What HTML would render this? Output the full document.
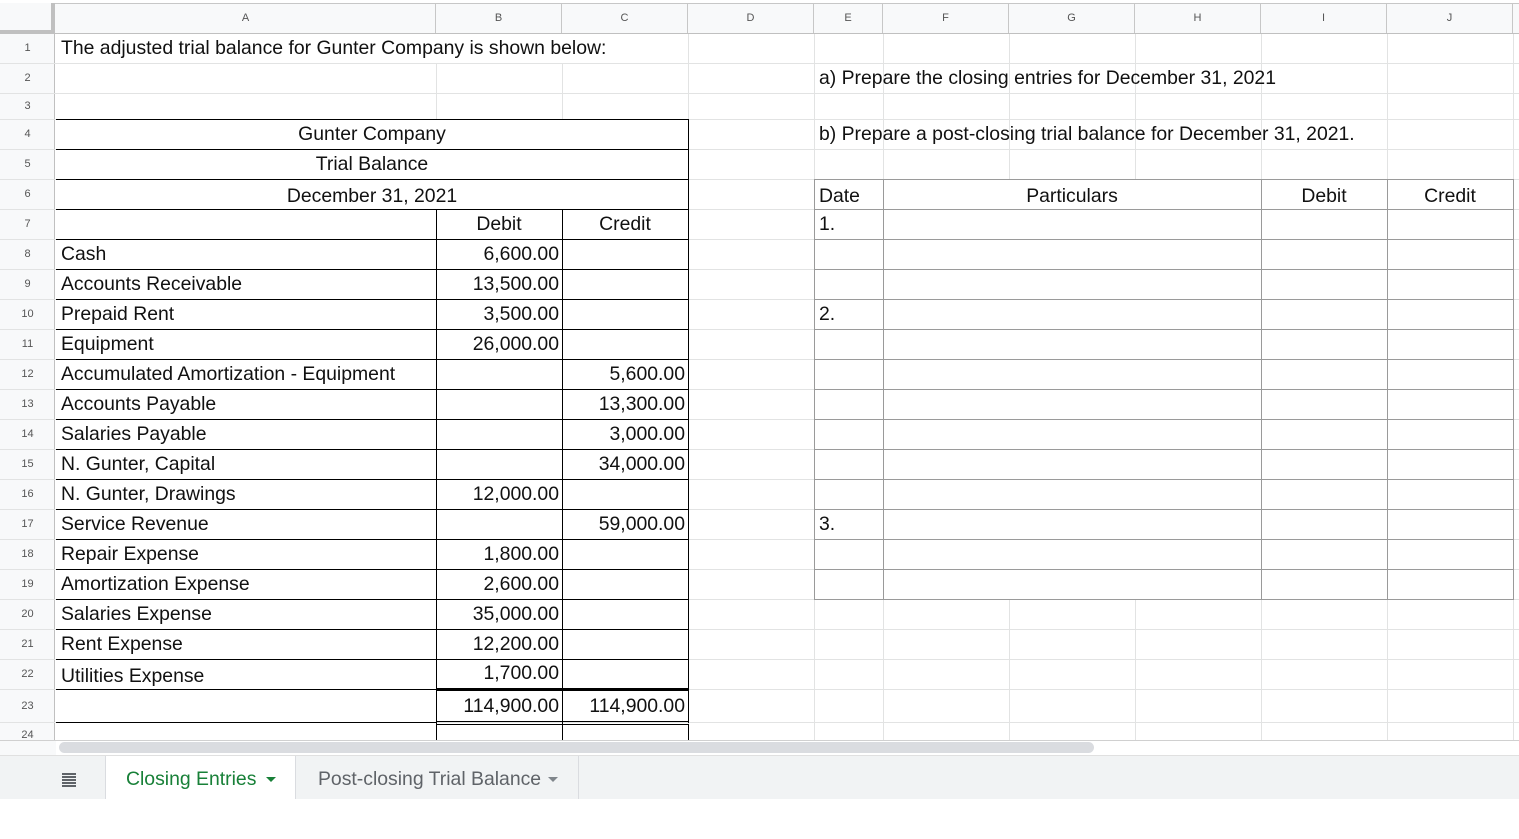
<!DOCTYPE html>
<html><head><meta charset="utf-8"><style>
*{margin:0;padding:0;box-sizing:border-box}
body{width:1519px;height:839px;background:#fff;position:relative;overflow:hidden;font-family:"Liberation Sans",sans-serif;color:#111}
div{position:absolute}
.h{background:#f8f9fa}
.gl{background:#e2e3e3}
.hd{top:4px;height:29px;line-height:29px;font-size:11px;color:#555;text-align:center;border-right:1px solid #c7c7c7}
.rn{left:0;width:55px;font-size:11px;color:#555;text-align:center}
.t{font-size:19.4px;white-space:nowrap}
.r{text-align:right}
.c{text-align:center}
.bk{background:#000}
.gr{background:#9a9a9a}
.w{background:#fff}
</style></head><body>
<div class="h" style="left:0;top:3px;width:1519px;height:31px;border-top:1px solid #c7c7c7;border-bottom:1px solid #c0c0c0"></div>
<div class="h" style="left:0;top:34px;width:55px;height:707px;border-right:1px solid #c0c0c0"></div>
<div style="left:0;top:3px;width:55px;height:31px;background:#f8f9fa;border-right:4px solid #c0c0c0;border-bottom:4px solid #c0c0c0"></div>
<div class="hd" style="left:56px;width:380px">A</div>
<div class="hd" style="left:436px;width:126px">B</div>
<div class="hd" style="left:562px;width:126px">C</div>
<div class="hd" style="left:688px;width:126px">D</div>
<div class="hd" style="left:814px;width:69px">E</div>
<div class="hd" style="left:883px;width:126px">F</div>
<div class="hd" style="left:1009px;width:126px">G</div>
<div class="hd" style="left:1135px;width:126px">H</div>
<div class="hd" style="left:1261px;width:126px">I</div>
<div class="hd" style="left:1387px;width:126px">J</div>
<div class="gl" style="left:436px;top:34px;width:1px;height:707px"></div>
<div class="gl" style="left:562px;top:34px;width:1px;height:707px"></div>
<div class="gl" style="left:688px;top:34px;width:1px;height:707px"></div>
<div class="gl" style="left:814px;top:34px;width:1px;height:707px"></div>
<div class="gl" style="left:883px;top:34px;width:1px;height:707px"></div>
<div class="gl" style="left:1009px;top:34px;width:1px;height:707px"></div>
<div class="gl" style="left:1135px;top:34px;width:1px;height:707px"></div>
<div class="gl" style="left:1261px;top:34px;width:1px;height:707px"></div>
<div class="gl" style="left:1387px;top:34px;width:1px;height:707px"></div>
<div class="gl" style="left:1513px;top:34px;width:1px;height:707px"></div>
<div class="gl" style="left:0;top:63px;width:1519px;height:1px"></div>
<div class="gl" style="left:0;top:93px;width:1519px;height:1px"></div>
<div class="gl" style="left:0;top:119px;width:1519px;height:1px"></div>
<div class="gl" style="left:0;top:149px;width:1519px;height:1px"></div>
<div class="gl" style="left:0;top:179px;width:1519px;height:1px"></div>
<div class="gl" style="left:0;top:209px;width:1519px;height:1px"></div>
<div class="gl" style="left:0;top:239px;width:1519px;height:1px"></div>
<div class="gl" style="left:0;top:269px;width:1519px;height:1px"></div>
<div class="gl" style="left:0;top:299px;width:1519px;height:1px"></div>
<div class="gl" style="left:0;top:329px;width:1519px;height:1px"></div>
<div class="gl" style="left:0;top:359px;width:1519px;height:1px"></div>
<div class="gl" style="left:0;top:389px;width:1519px;height:1px"></div>
<div class="gl" style="left:0;top:419px;width:1519px;height:1px"></div>
<div class="gl" style="left:0;top:449px;width:1519px;height:1px"></div>
<div class="gl" style="left:0;top:479px;width:1519px;height:1px"></div>
<div class="gl" style="left:0;top:509px;width:1519px;height:1px"></div>
<div class="gl" style="left:0;top:539px;width:1519px;height:1px"></div>
<div class="gl" style="left:0;top:569px;width:1519px;height:1px"></div>
<div class="gl" style="left:0;top:599px;width:1519px;height:1px"></div>
<div class="gl" style="left:0;top:629px;width:1519px;height:1px"></div>
<div class="gl" style="left:0;top:659px;width:1519px;height:1px"></div>
<div class="gl" style="left:0;top:689px;width:1519px;height:1px"></div>
<div class="gl" style="left:0;top:722px;width:1519px;height:1px"></div>
<!-- white-outs for merged cells -->
<div class="w" style="left:56px;top:34px;width:632px;height:29px"></div>
<div class="w" style="left:56px;top:120px;width:632px;height:89px"></div>
<div class="w" style="left:884px;top:180px;width:377px;height:419px"></div>
<div class="rn" style="top:34px;line-height:29px">1</div>
<div class="rn" style="top:64px;line-height:29px">2</div>
<div class="rn" style="top:94px;line-height:25px">3</div>
<div class="rn" style="top:120px;line-height:29px">4</div>
<div class="rn" style="top:150px;line-height:29px">5</div>
<div class="rn" style="top:180px;line-height:29px">6</div>
<div class="rn" style="top:210px;line-height:29px">7</div>
<div class="rn" style="top:240px;line-height:29px">8</div>
<div class="rn" style="top:270px;line-height:29px">9</div>
<div class="rn" style="top:300px;line-height:29px">10</div>
<div class="rn" style="top:330px;line-height:29px">11</div>
<div class="rn" style="top:360px;line-height:29px">12</div>
<div class="rn" style="top:390px;line-height:29px">13</div>
<div class="rn" style="top:420px;line-height:29px">14</div>
<div class="rn" style="top:450px;line-height:29px">15</div>
<div class="rn" style="top:480px;line-height:29px">16</div>
<div class="rn" style="top:510px;line-height:29px">17</div>
<div class="rn" style="top:540px;line-height:29px">18</div>
<div class="rn" style="top:570px;line-height:29px">19</div>
<div class="rn" style="top:600px;line-height:29px">20</div>
<div class="rn" style="top:630px;line-height:29px">21</div>
<div class="rn" style="top:660px;line-height:29px">22</div>
<div class="rn" style="top:691px;line-height:31px">23</div>
<div class="rn" style="top:726px;line-height:18px">24</div>
<div class="bk" style="left:56px;top:119px;width:633px;height:1px"></div>
<div class="bk" style="left:56px;top:149px;width:633px;height:1px"></div>
<div class="bk" style="left:56px;top:179px;width:633px;height:1px"></div>
<div class="bk" style="left:56px;top:209px;width:633px;height:1px"></div>
<div class="bk" style="left:56px;top:239px;width:633px;height:1px"></div>
<div class="bk" style="left:56px;top:269px;width:633px;height:1px"></div>
<div class="bk" style="left:56px;top:299px;width:633px;height:1px"></div>
<div class="bk" style="left:56px;top:329px;width:633px;height:1px"></div>
<div class="bk" style="left:56px;top:359px;width:633px;height:1px"></div>
<div class="bk" style="left:56px;top:389px;width:633px;height:1px"></div>
<div class="bk" style="left:56px;top:419px;width:633px;height:1px"></div>
<div class="bk" style="left:56px;top:449px;width:633px;height:1px"></div>
<div class="bk" style="left:56px;top:479px;width:633px;height:1px"></div>
<div class="bk" style="left:56px;top:509px;width:633px;height:1px"></div>
<div class="bk" style="left:56px;top:539px;width:633px;height:1px"></div>
<div class="bk" style="left:56px;top:569px;width:633px;height:1px"></div>
<div class="bk" style="left:56px;top:599px;width:633px;height:1px"></div>
<div class="bk" style="left:56px;top:629px;width:633px;height:1px"></div>
<div class="bk" style="left:56px;top:659px;width:633px;height:1px"></div>
<div class="bk" style="left:56px;top:689px;width:380px;height:1px"></div>
<div class="bk" style="left:436px;top:688px;width:253px;height:3px"></div>
<div class="bk" style="left:56px;top:722px;width:380px;height:1px"></div>
<div class="bk" style="left:436px;top:721px;width:253px;height:1px"></div>
<div class="bk" style="left:436px;top:724px;width:253px;height:1px"></div>
<div class="bk" style="left:688px;top:119px;width:1px;height:604px"></div>
<div class="bk" style="left:436px;top:209px;width:1px;height:531px"></div>
<div class="bk" style="left:562px;top:209px;width:1px;height:531px"></div>
<div class="bk" style="left:688px;top:724px;width:1px;height:17px"></div>
<div class="gr" style="left:814px;top:179px;width:700px;height:1px"></div>
<div class="gr" style="left:814px;top:209px;width:700px;height:1px"></div>
<div class="gr" style="left:814px;top:239px;width:700px;height:1px"></div>
<div class="gr" style="left:814px;top:269px;width:700px;height:1px"></div>
<div class="gr" style="left:814px;top:299px;width:700px;height:1px"></div>
<div class="gr" style="left:814px;top:329px;width:700px;height:1px"></div>
<div class="gr" style="left:814px;top:359px;width:700px;height:1px"></div>
<div class="gr" style="left:814px;top:389px;width:700px;height:1px"></div>
<div class="gr" style="left:814px;top:419px;width:700px;height:1px"></div>
<div class="gr" style="left:814px;top:449px;width:700px;height:1px"></div>
<div class="gr" style="left:814px;top:479px;width:700px;height:1px"></div>
<div class="gr" style="left:814px;top:509px;width:700px;height:1px"></div>
<div class="gr" style="left:814px;top:539px;width:700px;height:1px"></div>
<div class="gr" style="left:814px;top:569px;width:700px;height:1px"></div>
<div class="gr" style="left:814px;top:599px;width:700px;height:1px"></div>
<div class="gr" style="left:814px;top:179px;width:1px;height:421px"></div>
<div class="gr" style="left:883px;top:179px;width:1px;height:421px"></div>
<div class="gr" style="left:1261px;top:179px;width:1px;height:421px"></div>
<div class="gr" style="left:1387px;top:179px;width:1px;height:421px"></div>
<div class="gr" style="left:1513px;top:179px;width:1px;height:421px"></div>
<div class="t" style="left:61px;top:34px;line-height:29px">The adjusted trial balance for Gunter Company is shown below:</div>
<div class="t c" style="left:56px;top:120px;width:632px;line-height:29px">Gunter Company</div>
<div class="t c" style="left:56px;top:150px;width:632px;line-height:29px">Trial Balance</div>
<div class="t c" style="left:56px;top:182px;width:632px;line-height:29px">December 31, 2021</div>
<div class="t c" style="left:436px;top:210px;width:126px;line-height:29px">Debit</div>
<div class="t c" style="left:562px;top:210px;width:126px;line-height:29px">Credit</div>
<div class="t" style="left:61px;top:240px;line-height:29px">Cash</div>
<div class="t" style="left:61px;top:270px;line-height:29px">Accounts Receivable</div>
<div class="t" style="left:61px;top:300px;line-height:29px">Prepaid Rent</div>
<div class="t" style="left:61px;top:330px;line-height:29px">Equipment</div>
<div class="t" style="left:61px;top:360px;line-height:29px">Accumulated Amortization - Equipment</div>
<div class="t" style="left:61px;top:390px;line-height:29px">Accounts Payable</div>
<div class="t" style="left:61px;top:420px;line-height:29px">Salaries Payable</div>
<div class="t" style="left:61px;top:450px;line-height:29px">N. Gunter, Capital</div>
<div class="t" style="left:61px;top:480px;line-height:29px">N. Gunter, Drawings</div>
<div class="t" style="left:61px;top:510px;line-height:29px">Service Revenue</div>
<div class="t" style="left:61px;top:540px;line-height:29px">Repair Expense</div>
<div class="t" style="left:61px;top:570px;line-height:29px">Amortization Expense</div>
<div class="t" style="left:61px;top:600px;line-height:29px">Salaries Expense</div>
<div class="t" style="left:61px;top:630px;line-height:29px">Rent Expense</div>
<div class="t" style="left:61px;top:662px;line-height:29px">Utilities Expense</div>
<div class="t r" style="left:436px;top:240px;width:123px;line-height:29px">6,600.00</div>
<div class="t r" style="left:436px;top:270px;width:123px;line-height:29px">13,500.00</div>
<div class="t r" style="left:436px;top:300px;width:123px;line-height:29px">3,500.00</div>
<div class="t r" style="left:436px;top:330px;width:123px;line-height:29px">26,000.00</div>
<div class="t r" style="left:562px;top:360px;width:123px;line-height:29px">5,600.00</div>
<div class="t r" style="left:562px;top:390px;width:123px;line-height:29px">13,300.00</div>
<div class="t r" style="left:562px;top:420px;width:123px;line-height:29px">3,000.00</div>
<div class="t r" style="left:562px;top:450px;width:123px;line-height:29px">34,000.00</div>
<div class="t r" style="left:436px;top:480px;width:123px;line-height:29px">12,000.00</div>
<div class="t r" style="left:562px;top:510px;width:123px;line-height:29px">59,000.00</div>
<div class="t r" style="left:436px;top:540px;width:123px;line-height:29px">1,800.00</div>
<div class="t r" style="left:436px;top:570px;width:123px;line-height:29px">2,600.00</div>
<div class="t r" style="left:436px;top:600px;width:123px;line-height:29px">35,000.00</div>
<div class="t r" style="left:436px;top:630px;width:123px;line-height:29px">12,200.00</div>
<div class="t r" style="left:436px;top:659px;width:123px;line-height:29px">1,700.00</div>
<div class="t r" style="left:436px;top:692px;width:123px;line-height:29px">114,900.00</div>
<div class="t r" style="left:562px;top:692px;width:123px;line-height:29px">114,900.00</div>
<div class="t" style="left:819px;top:64px;line-height:29px">a) Prepare the closing entries for December 31, 2021</div>
<div class="t" style="left:819px;top:120px;line-height:29px">b) Prepare a post-closing trial balance for December 31, 2021.</div>
<div class="t" style="left:819px;top:182px;line-height:29px">Date</div>
<div class="t c" style="left:883px;top:182px;width:378px;line-height:29px">Particulars</div>
<div class="t c" style="left:1261px;top:182px;width:126px;line-height:29px">Debit</div>
<div class="t c" style="left:1387px;top:182px;width:126px;line-height:29px">Credit</div>
<div class="t" style="left:819px;top:210px;line-height:29px">1.</div>
<div class="t" style="left:819px;top:300px;line-height:29px">2.</div>
<div class="t" style="left:819px;top:510px;line-height:29px">3.</div>
<div style="left:0;top:740px;width:1519px;height:15px;background:#fff;border-top:1px solid #d0d0d0"></div>
<div style="left:0;top:741px;width:56px;height:14px;background:#f8f9fa"></div>
<div style="left:59px;top:742px;width:1035px;height:11px;background:#dadce0;border-radius:6px"></div>
<div style="left:0;top:755px;width:1519px;height:44px;background:#f1f3f4;border-top:1px solid #e0e0e0"></div>
<div style="left:62px;top:773px;width:14px;height:2px;background:#5f6368;box-shadow:0 3px 0 #5f6368,0 6px 0 #5f6368,0 9px 0 #5f6368,0 12px 0 #5f6368"></div>
<div style="left:105px;top:756px;width:191px;height:43px;background:#fff;border-left:1px solid #dadce0;border-right:1px solid #dadce0"></div>
<div style="left:126px;top:756px;line-height:46px;font-size:19.4px;color:#188038">Closing Entries</div>
<div style="left:266px;top:777px;width:0;height:0;border-left:5px solid transparent;border-right:5px solid transparent;border-top:5px solid #188038"></div>
<div style="left:297px;top:756px;width:282px;height:43px;border-right:1px solid #dadce0"></div>
<div style="left:318px;top:756px;line-height:46px;font-size:19.4px;color:#5f6368">Post-closing Trial Balance</div>
<div style="left:548px;top:777px;width:0;height:0;border-left:5px solid transparent;border-right:5px solid transparent;border-top:5px solid #80868b"></div>
</body></html>
